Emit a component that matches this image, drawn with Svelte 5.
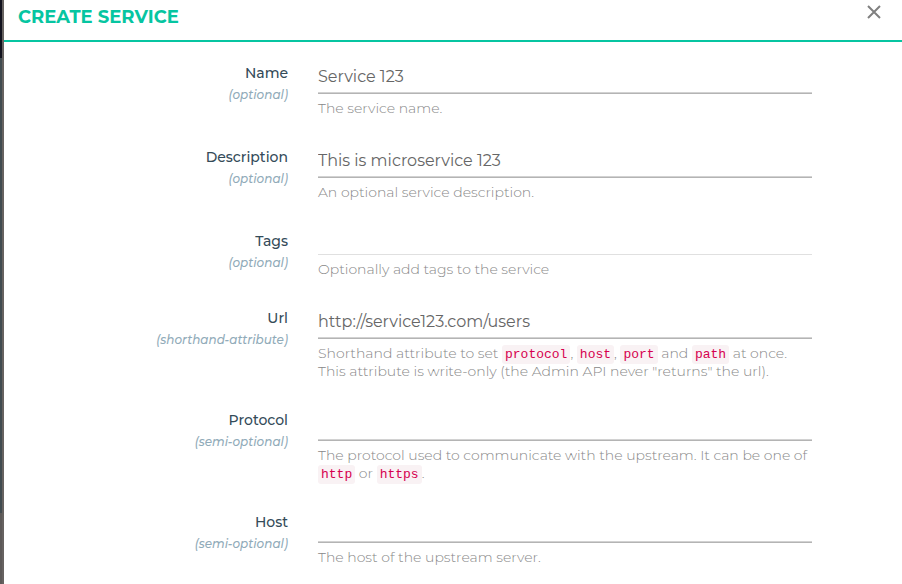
<script>
  const fields = [
    { id: 'name', label: 'Name', note: '(optional)', value: 'Service 123', hint: [['The service name.']] },
    { id: 'description', label: 'Description', note: '(optional)', value: 'This is microservice 123', hint: [['An optional service description.']] },
    { id: 'tags', label: 'Tags', note: '(optional)', value: '', chips: true, hint: [['Optionally add tags to the service']] },
    {
      id: 'url', label: 'Url', note: '(shorthand-attribute)', value: 'http://service123.com/users',
      hint: [
        ['Shorthand attribute to set ', { code: 'protocol' }, ', ', { code: 'host' }, ', ', { code: 'port' }, ' and ', { code: 'path' }, ' at once.'],
        ['This attribute is write-only (the Admin API never "returns" the url).']
      ]
    },
    {
      id: 'protocol', label: 'Protocol', note: '(semi-optional)', value: '',
      hint: [
        ['The protocol used to communicate with the upstream. It can be one of'],
        [{ code: 'http' }, ' or ', { code: 'https' }, '.']
      ]
    },
    { id: 'host', label: 'Host', note: '(semi-optional)', value: '', hint: [['The host of the upstream server.']] }
  ];
</script>

<div class="page">
  <div class="backdrop"><span class="topbar"></span><span class="sidebar"></span><span class="rest"></span></div>
  <main class="modal">
    <header>
      <h1>CREATE SERVICE</h1>
      <button type="button" aria-label="Close">
        <svg viewBox="0 0 14 14" width="14" height="14"><path d="M1 1L13 13M13 1L1 13" fill="none" stroke="#808080" stroke-width="2" /></svg>
      </button>
    </header>
    <form>
      {#each fields as f (f.id)}
        <div class="row">
          <label for={f.id}>{f.label}<em>{f.note}</em></label>
          <div class="control">
            <input id={f.id} type="text" value={f.value} class:chips={f.chips} />
            {#each f.hint as line}
              <p>{#each line as part}{#if part.code}<code>{part.code}</code>{:else}{part}{/if}{/each}</p>
            {/each}
          </div>
        </div>
      {/each}
    </form>
  </main>
</div>

<style>
  .page {
    display: flex;
    height: 100vh;
    overflow: hidden;
    background: #fff;
    font-family: Montserrat, Inter, sans-serif;
    font-size: 14px;
  }
  .backdrop {
    display: flex;
    flex-direction: column;
    flex: none;
    box-sizing: border-box;
    width: 4px;
    border-right: 2px solid #666260;
  }
  .topbar { height: 58px; background: #12121e; }
  .sidebar { flex: 1; background: #414b50; }
  .rest { height: 71px; background: #5c5958; }
  .modal { flex: 1; min-width: 0; }
  header {
    display: flex;
    justify-content: space-between;
    box-sizing: border-box;
    height: 42px;
    padding: 5px 21px 0 14px;
    border-bottom: 2px solid #06c5a1;
  }
  h1 {
    margin: 0;
    font-size: 18px;
    line-height: 24px;
    font-weight: 700;
    color: #06c5a1;
  }
  button {
    display: flex;
    align-self: flex-start;
    padding: 0;
    border: 0;
    background: none;
  }
  form { padding: 18px 90px 0 0; }
  .row {
    display: grid;
    grid-template-columns: 284px 1fr;
    column-gap: 30px;
    margin-bottom: 27px;
  }
  label {
    padding-top: 3px;
    text-align: right;
    line-height: 21px;
    font-weight: 500;
    color: #344b59;
  }
  em {
    display: block;
    font-size: 12px;
    font-weight: 500;
    color: #91abb9;
  }
  input {
    display: block;
    box-sizing: border-box;
    width: 100%;
    height: 34px;
    margin-bottom: 5px;
    padding: 0 0 1px;
    border: 0;
    border-bottom: 1px solid #b4b4b4;
    border-radius: 0;
    box-shadow: inset 0 -1px #d2d2d2;
    outline: 0;
    background: none;
    font-family: inherit;
    font-size: 16px;
    font-weight: 400;
    color: #666;
  }
  .chips {
    height: 27px;
    border-bottom-color: #e0e0e0;
    box-shadow: none;
  }
  p {
    margin: 0;
    height: 18px;
    line-height: 18px;
    font-weight: 300;
    color: #888;
    white-space: pre-wrap;
  }
  code {
    padding: 2px 3px;
    border-radius: 3px;
    background: #f9f2f4;
    font-family: "Liberation Mono", monospace;
    font-size: 13px;
    font-weight: 400;
    color: #d6004f;
  }
</style>
